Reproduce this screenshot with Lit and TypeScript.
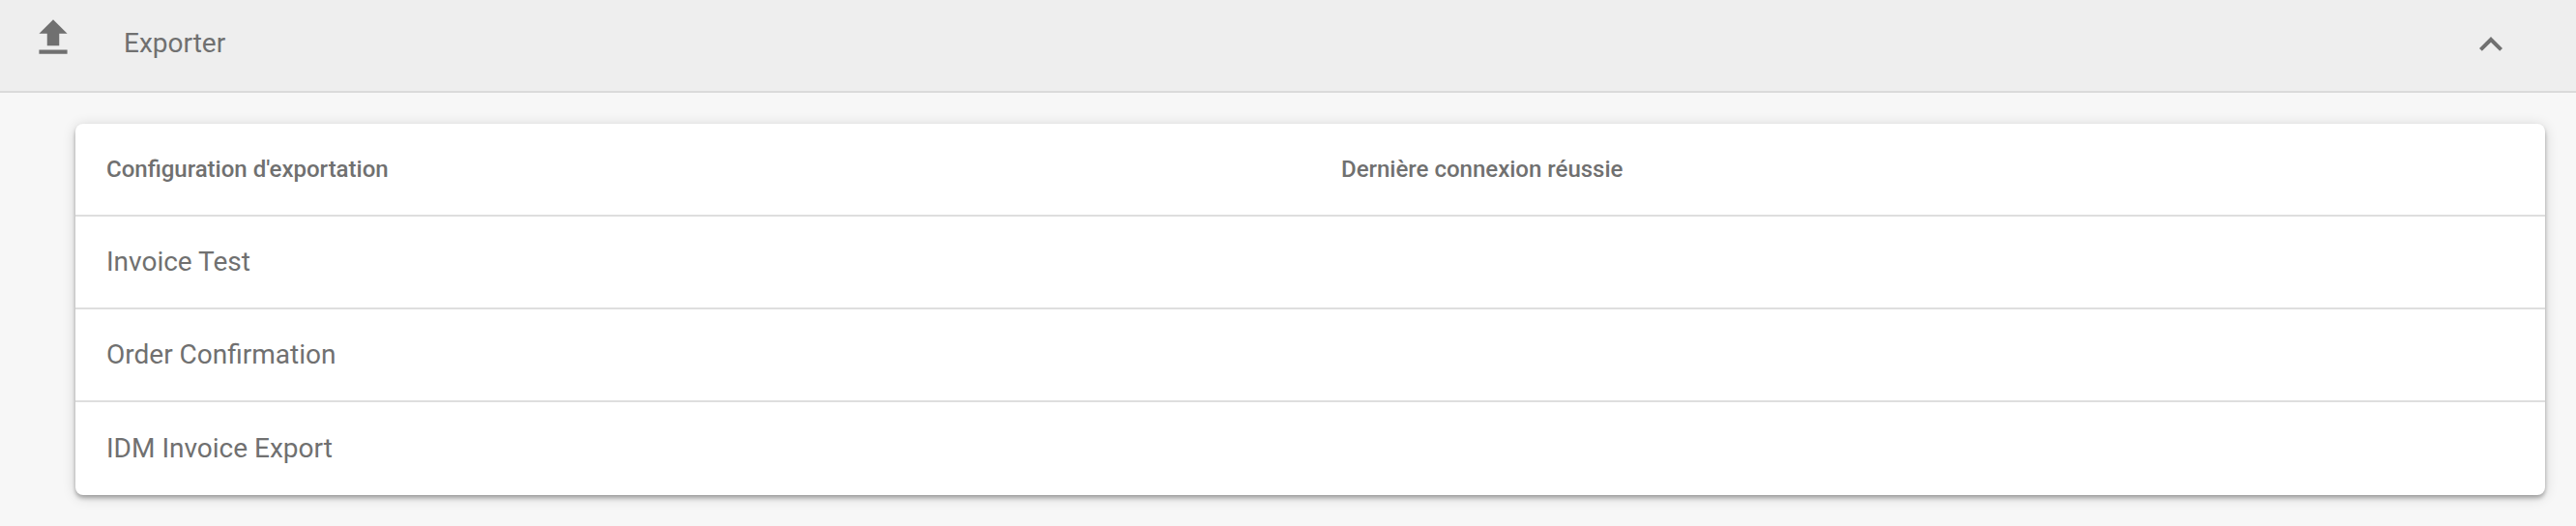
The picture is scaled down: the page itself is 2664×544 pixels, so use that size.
import { LitElement, html, css } from "lit";
import { customElement } from "lit/decorators.js";

@customElement("app-root")
export class AppRoot extends LitElement {
  static styles = css`
    :host { display: block; height: 544px; background: #f7f7f7; color: #707070; font-family: Roboto, sans-serif; overflow: hidden; }
    * { box-sizing: border-box; }
    .bar { display: flex; align-items: center; height: 96px; background: #eee; border-bottom: 2px solid #dadada; padding: 0 64px 5px 30px; }
    .upload { width: 50px; height: 50px; align-self: flex-start; margin-top: 14px; }
    .title { margin-left: 48px; font-size: 28px; flex: 1; }
    .chevron { width: 48px; height: 48px; align-self: flex-start; margin-top: 22px; }
    svg { fill: currentColor; display: block; }
    .card { margin: 32px 32px 0 78px; background: #fff; border-radius: 8px; box-shadow: 0 2px 4px -1px rgba(0,0,0,.22), 0 4px 4px rgba(0,0,0,.16), 0 2px 14px rgba(0,0,0,.16); }
    .row { display: grid; grid-template-columns: 1fr 1fr; align-items: center; height: 96px; padding-bottom: 1px; border-bottom: 2px solid #dedede; font-size: 28px; }
    .row > span { padding: 0 32px; }
    .row.head { font-size: 24px; font-weight: 500; padding-bottom: 0; }
    .row:last-child { border-bottom: 0; }
  `;
  render() {
    return html`
      <div class="bar">
        <svg class="upload" viewBox="0 0 24 24"><path d="M5 20h14v-2H5v2zm0-10h4v6h6v-6h4l-7-7-7 7z"/></svg>
        <span class="title">Exporter</span>
        <svg class="chevron" viewBox="0 0 24 24"><path d="M12 8l-6 6 1.41 1.41L12 10.83l4.59 4.58L18 14z"/></svg>
      </div>
      <div class="card">
        <div class="row head"><span>Configuration d'exportation</span><span>Dernière connexion réussie</span></div>
        ${["Invoice Test", "Order Confirmation", "IDM Invoice Export"].map((n) => html`<div class="row"><span>${n}</span><span></span></div>`)}
      </div>`;
  }
}
